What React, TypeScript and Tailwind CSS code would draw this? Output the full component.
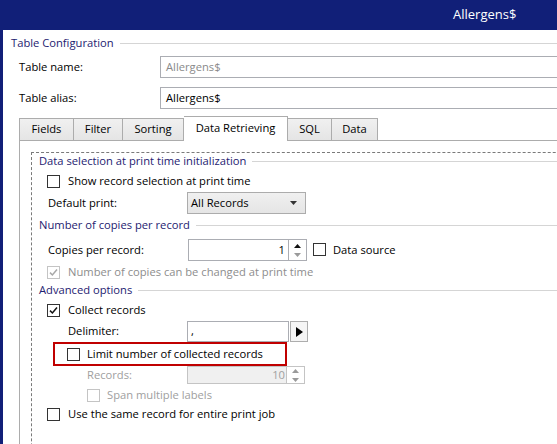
import React from 'react';

// Windows-style table configuration dialog
function GroupHeader({ title, className = '' }: { title: string; className?: string }) {
  return (
    <div className={`flex shrink-0 items-center ${className}`}>
      <span className="whitespace-nowrap text-[#1e2170]">{title}</span>
      <div className="ml-[6px] h-px flex-1 bg-[#d5d5d5]" />
    </div>
  );
}

function CheckBox({ checked = false, disabled = false }: { checked?: boolean; disabled?: boolean }) {
  return (
    <span
      className={`flex h-[13px] w-[13px] shrink-0 items-center justify-center border bg-white ${
        disabled ? 'border-[#c4c4c4]' : 'border-[#333333]'
      }`}
    >
      {checked && (
        <svg width="11" height="11" viewBox="0 0 11 11">
          <path
            d="M2 5.6 L4.4 8 L9 2.6"
            fill="none"
            stroke={disabled ? '#a8a8a8' : '#111111'}
            strokeWidth="1.5"
          />
        </svg>
      )}
    </span>
  );
}

function Spinner({ disabled = false }: { disabled?: boolean }) {
  return (
    <div
      className={`flex h-full w-[18px] shrink-0 flex-col items-center justify-center gap-[5px] border border-l-0 ${
        disabled ? 'border-[#c4c4c4] bg-white' : 'border-[#abadb3] bg-white'
      }`}
    >
      <svg width="7" height="4" viewBox="0 0 7 4">
        <path d="M0 4 L3.5 0 L7 4 Z" fill={disabled ? '#9a9a9a' : '#111111'} />
      </svg>
      <svg width="7" height="4" viewBox="0 0 7 4">
        <path d="M0 0 L3.5 4 L7 0 Z" fill="#9a9a9a" />
      </svg>
    </div>
  );
}

const tabs = [
  { label: 'Fields', w: 'w-[55px] border-l' },
  { label: 'Filter', w: 'w-[49px]' },
  { label: 'Sorting', w: 'w-[61px]' },
  { label: 'Data Retrieving', w: 'w-[104px]', active: true },
  { label: 'SQL', w: 'w-[44px]' },
  { label: 'Data', w: 'w-[46px]' },
];

export default function App() {
  return (
    <div className="flex h-[444px] w-[557px] flex-col overflow-hidden bg-white font-['Open_Sans',sans-serif] text-[11.2px] text-black">
      {/* title bar */}
      <div className="flex h-[30px] shrink-0 items-center bg-[#111f78] pl-[453px] text-[13px] text-white">
        Allergens$
      </div>

      <div className="flex min-h-0 flex-1 overflow-hidden">
        <div className="w-[3px] shrink-0 bg-[#111f78]" />

        <div className="flex min-h-0 flex-1 flex-col overflow-hidden">
          <GroupHeader title="Table Configuration" className="mt-[5px] h-[16px] pl-[8px]" />

          <div className="mt-[5px] flex h-[22px] shrink-0 items-center pl-[16px]">
            <span className="w-[141px] shrink-0">Table name:</span>
            <div className="flex h-full w-[450px] shrink-0 items-center border border-[#abadb3] pl-[5px] text-[#8a8a8a]">
              Allergens$
            </div>
          </div>

          <div className="mt-[9px] flex h-[22px] shrink-0 items-center pl-[16px]">
            <span className="w-[141px] shrink-0">Table alias:</span>
            <div className="flex h-full w-[450px] shrink-0 items-center border border-[#abadb3] pl-[5px]">
              Allergens$
            </div>
          </div>

          {/* tab strip */}
          <div className="mt-[7px] flex h-[25px] shrink-0 items-end pl-[16px]">
            {tabs.map((t) =>
              t.active ? (
                <div
                  key={t.label}
                  className={`${t.w} flex h-[25px] shrink-0 items-center justify-center border-t border-r border-[#acacac] bg-white pb-[2px]`}
                >
                  {t.label}
                </div>
              ) : (
                <div
                  key={t.label}
                  className={`${t.w} flex h-[23px] shrink-0 items-center justify-center border-t border-r border-b border-[#acacac] bg-gradient-to-b from-[#f0f0f0] to-[#e5e5e5]`}
                >
                  {t.label}
                </div>
              )
            )}
            <div className="h-[25px] flex-1 border-b border-[#acacac]" />
          </div>

          {/* tab panel */}
          <div className="ml-[16px] flex min-h-0 flex-1 flex-col overflow-hidden border-l border-[#acacac]">
            <div className="ml-[11px] mt-[11px] flex h-[420px] w-[600px] shrink-0 flex-col border border-dashed border-[#7a7a7a]">
              <GroupHeader title="Data selection at print time initialization" className="h-[17px] pl-[7px]" />

              <div className="flex h-[22px] shrink-0 items-center gap-[8px] pl-[15px]">
                <CheckBox />
                <span>Show record selection at print time</span>
              </div>

              <div className="flex h-[22px] shrink-0 items-center pl-[16px]">
                <span className="w-[139px] shrink-0">Default print:</span>
                <div className="flex h-[22px] w-[119px] shrink-0 items-center justify-between border border-[#acacac] bg-gradient-to-b from-[#f0f0f0] to-[#e5e5e5] pl-[3px] pr-[8px]">
                  <span>All Records</span>
                  <svg width="7" height="4" viewBox="0 0 7 4">
                    <path d="M0 0 L3.5 4 L7 0 Z" fill="#333333" />
                  </svg>
                </div>
              </div>

              <GroupHeader title="Number of copies per record" className="h-[22px] pl-[7px]" />

              <div className="mt-[3px] flex h-[22px] shrink-0 items-center pl-[16px]">
                <span className="w-[140px] shrink-0">Copies per record:</span>
                <div className="flex h-full w-[101px] shrink-0 items-center justify-end border border-[#abadb3] pr-[3px]">
                  1
                </div>
                <Spinner />
                <div className="ml-[6px] flex items-center gap-[7px]">
                  <CheckBox />
                  <span>Data source</span>
                </div>
              </div>

              <div className="flex h-[22px] shrink-0 items-center gap-[8px] pl-[15px] text-[#8d8d8d]">
                <CheckBox checked disabled />
                <span>Number of copies can be changed at print time</span>
              </div>

              <GroupHeader title="Advanced options" className="h-[15px] pl-[7px]" />

              <div className="mt-[2px] flex h-[21px] shrink-0 items-center gap-[8px] pl-[15px]">
                <CheckBox checked />
                <span>Collect records</span>
              </div>

              <div className="flex h-[21px] shrink-0 items-center pl-[36px]">
                <span className="w-[119px] shrink-0">Delimiter:</span>
                <div className="flex h-full w-[102px] shrink-0 items-end border border-[#abadb3] pb-[1px] pl-[3px]">
                  ,
                </div>
                <div className="ml-px flex h-full w-[18px] shrink-0 items-center justify-center border border-[#adadad] bg-[#f5f5f5]">
                  <svg width="7" height="10" viewBox="0 0 7 10">
                    <path d="M0 0 L7 5 L0 10 Z" fill="#000000" />
                  </svg>
                </div>
              </div>

              <div className="ml-[21px] flex h-[24px] w-[234px] shrink-0 items-center gap-[7px] border-2 border-[#c00000] pl-[12px]">
                <CheckBox />
                <span>Limit number of collected records</span>
              </div>

              <div className="flex h-[18px] shrink-0 items-center pl-[55px] text-[#a0a0a0]">
                <span className="w-[100px] shrink-0">Records:</span>
                <div className="flex h-full w-[100px] shrink-0 items-center justify-end border border-[#c4c4c4] bg-[#f0f0f0] pr-[1px]">
                  10
                </div>
                <Spinner disabled />
              </div>

              <div className="flex h-[22px] shrink-0 items-center gap-[7px] pl-[55px] text-[#a0a0a0]">
                <CheckBox disabled />
                <span>Span multiple labels</span>
              </div>

              <div className="flex h-[16px] shrink-0 items-center gap-[8px] pl-[15px]">
                <CheckBox />
                <span>Use the same record for entire print job</span>
              </div>
            </div>
          </div>
        </div>
      </div>
    </div>
  );
}
